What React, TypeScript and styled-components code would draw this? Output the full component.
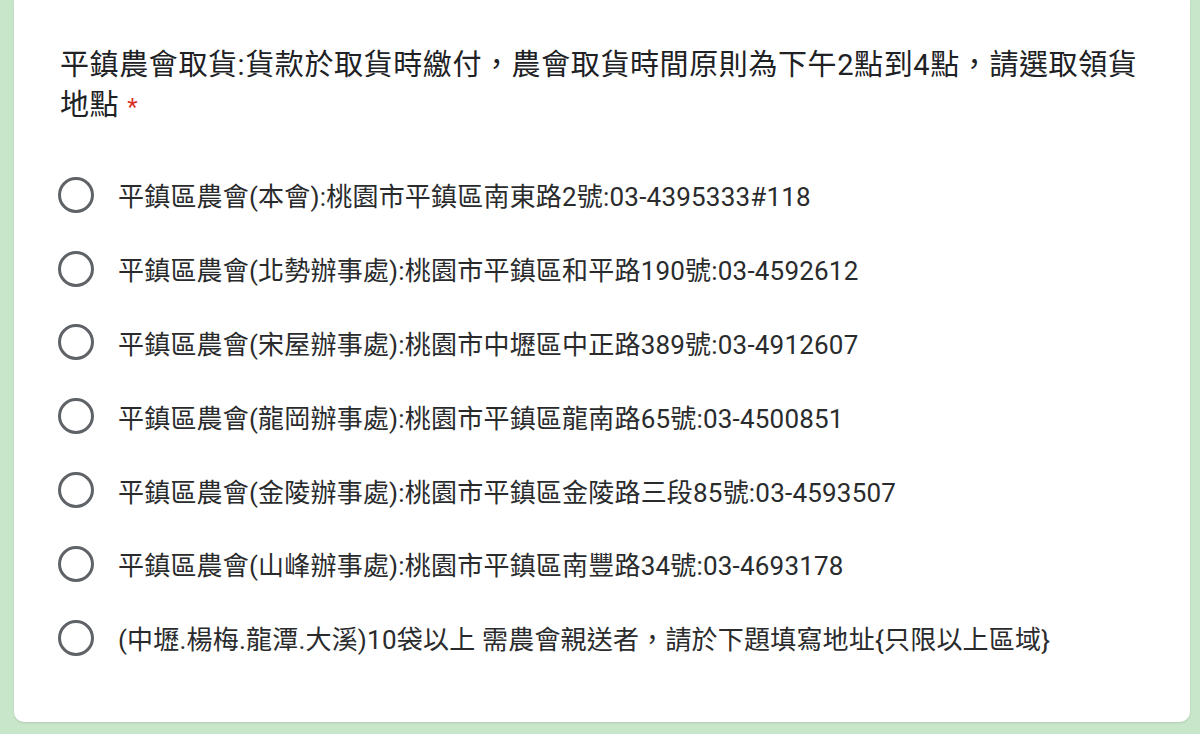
import React, { useState } from "react"
import styled, { createGlobalStyle } from "styled-components"

const GlobalStyle = createGlobalStyle`
    html, body {
        margin: 0;
        padding: 0;
        background-color: #c8e6c9;
    }
    body {
        font-family: Roboto, "Noto Sans CJK TC", "Noto Sans", sans-serif;
        color: #202124;
    }
`

const Page = styled.div`
    height: 734px;
    padding: 0 10px 14px 14px;
    box-sizing: border-box;
    overflow: hidden;
`

const Card = styled.div`
    background-color: white;
    border-radius: 0 0 10px 10px;
    padding: 45px 46px 47px 44px;
    box-shadow: 0 1px 2px rgba(60, 64, 67, 0.15);
`

const Title = styled.div`
    font-size: 29px;
    line-height: 40px;
    letter-spacing: 0.6px;
    padding-left: 2px;
    margin-bottom: 33px;
`

const Required = styled.span`
    color: #d93025;
    font-size: 24px;
    line-height: 1;
    margin-left: 8px;
`

const Option = styled.label`
    display: flex;
    align-items: center;
    height: 73.8px;
    cursor: pointer;
    font-size: 26px;
    letter-spacing: 0.2px;
    color: #2a2b2d;
`

const Radio = styled.span<{ $checked: boolean }>`
    width: 36px;
    height: 36px;
    box-sizing: border-box;
    border: 3px solid ${(p) => (p.$checked ? "#1e8e3e" : "#5f6368")};
    border-radius: 50%;
    margin-right: 24px;
    flex-shrink: 0;
    display: flex;
    align-items: center;
    justify-content: center;
    &::after {
        content: "";
        width: 18px;
        height: 18px;
        border-radius: 50%;
        background-color: #1e8e3e;
        display: ${(p) => (p.$checked ? "block" : "none")};
    }
`

const options = [
    "平鎮區農會(本會):桃園市平鎮區南東路2號:03-4395333#118",
    "平鎮區農會(北勢辦事處):桃園市平鎮區和平路190號:03-4592612",
    "平鎮區農會(宋屋辦事處):桃園市中壢區中正路389號:03-4912607",
    "平鎮區農會(龍岡辦事處):桃園市平鎮區龍南路65號:03-4500851",
    "平鎮區農會(金陵辦事處):桃園市平鎮區金陵路三段85號:03-4593507",
    "平鎮區農會(山峰辦事處):桃園市平鎮區南豐路34號:03-4693178",
    "(中壢.楊梅.龍潭.大溪)10袋以上 需農會親送者，請於下題填寫地址{只限以上區域}",
]

export default function App() {
    const [picked, setPicked] = useState<number>(-1)
    return (
        <Page>
            <GlobalStyle />
            <Card>
                <Title>
                    平鎮農會取貨:貨款於取貨時繳付，農會取貨時間原則為下午2點到4點，請選取領貨地點
                    <Required>*</Required>
                </Title>
                {options.map((text, i) => (
                    <Option key={i} onClick={() => setPicked(i)}>
                        <Radio $checked={picked === i} />
                        {text}
                    </Option>
                ))}
            </Card>
        </Page>
    )
}
